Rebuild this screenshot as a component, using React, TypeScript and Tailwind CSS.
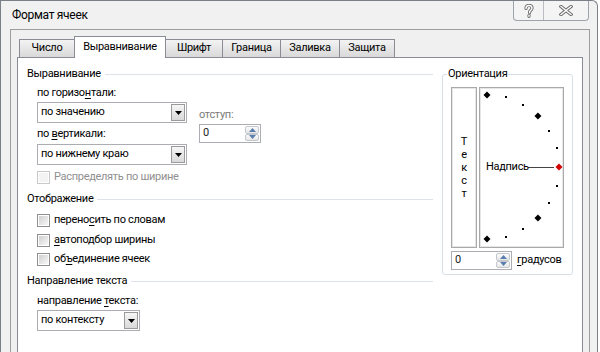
import React from "react";

const font = "font-['Roboto',sans-serif] tracking-[-0.3px]";

function Tri() {
  return (
    <svg width="7" height="4" viewBox="0 0 7 4">
      <path d="M0 0H7L3.5 4Z" fill="#000" />
    </svg>
  );
}

function Combo({ text, w }: { text: string; w: string }) {
  return (
    <div className={`flex h-[21px] ${w} border border-[#abadb3] bg-white`}>
      <div className="flex flex-1 items-center pl-[3px] text-[11px] text-black">{text}</div>
      <div className="my-px mr-px flex w-[14px] items-center justify-center border border-[#9a9a9a] bg-gradient-to-b from-[#f6f6f6] to-[#d9d9d9]">
        <Tri />
      </div>
    </div>
  );
}

function SpinArrow({ up }: { up: boolean }) {
  return (
    <svg width="7" height="4" viewBox="0 0 7 4">
      <path d={up ? "M0 4H7L3.5 0Z" : "M0 0H7L3.5 4Z"} fill="#5a7fae" />
    </svg>
  );
}

function Spin({ w }: { w: string }) {
  return (
    <div className={`flex h-[19px] ${w} border border-[#abadb3] bg-white`}>
      <div className="flex flex-1 items-center pl-[3px] text-[11px] text-[#222]">0</div>
      <div className="flex w-[16px] flex-col p-px">
        <div className="flex flex-1 items-center justify-center rounded-[2px] border border-[#c3c8ce] bg-gradient-to-b from-[#fbfbfb] to-[#e6e6e6]">
          <SpinArrow up />
        </div>
        <div className="flex flex-1 items-center justify-center rounded-[2px] border border-[#c3c8ce] bg-gradient-to-b from-[#fbfbfb] to-[#e6e6e6]">
          <SpinArrow up={false} />
        </div>
      </div>
    </div>
  );
}

function Check({ disabled }: { disabled?: boolean }) {
  return (
    <div
      className={`h-[13px] w-[13px] shrink-0 border p-px ${
        disabled ? "border-[#c8c8c8] bg-white" : "border-[#8e8f8f] bg-white"
      }`}
    >
      <div
        className={`h-full w-full ${
          disabled ? "bg-[#f3f3f3]" : "bg-gradient-to-br from-[#cfcfcf] to-[#f8f8f8]"
        }`}
      />
    </div>
  );
}

function Heading({ children }: { children: React.ReactNode }) {
  return (
    <div className="flex h-[16px] items-center text-[11px] text-black">
      <span>{children}</span>
      <div className="ml-[4px] h-px flex-1 bg-[#dde3e8]" />
    </div>
  );
}

function CheckRow({ label, h, disabled }: { label: React.ReactNode; h: string; disabled?: boolean }) {
  return (
    <div className={`flex ${h} items-center gap-[4px] text-[11px] ${disabled ? "text-[#8f8f8f]" : "text-black"}`}>
      <Check disabled={disabled} />
      <span>{label}</span>
    </div>
  );
}

function Tab({ label, selected, w }: { label: string; selected?: boolean; w: string }) {
  if (selected) {
    return (
      <div
        className={`relative z-10 -mb-px -ml-px flex h-[22px] ${w} items-start justify-center border-l border-r border-t border-[#898c95] bg-white pt-[2px] text-[11px] text-black`}
      >
        {label}
      </div>
    );
  }
  return (
    <div
      className={`-ml-px flex h-[18px] ${w} items-center justify-center border-l border-r border-t border-[#898c95] bg-gradient-to-b from-[#f3f3f3] to-[#d9d9d9] text-[11px] text-black first:ml-0`}
    >
      {label}
    </div>
  );
}

function Orientation() {
  const cx = 7;
  const cy = 79;
  const r = 72;
  const angles = [90, 75, 60, 45, 30, 15, 0, -15, -30, -45, -60, -75, -90];
  return (
    <div className="relative mt-[8px] flex h-[201px] w-[131px] flex-col rounded-[3px] border border-[#d5dfe5] pl-[8px] pr-[8px] pt-[12px]">
      <span className="absolute left-[4px] top-[-9px] bg-white px-px text-[11px] leading-[16px] text-black">Ориентация</span>
      <div className="flex h-[161px]">
        <div className="flex w-[26px] flex-col items-center justify-center border border-[#a9a9a9] text-[11px] leading-[13px] text-black shadow-[inset_1px_1px_0_#e6e6e6,inset_-1px_-1px_0_#e6e6e6]">
          <span className="h-[13px]">Т</span>
          <span className="h-[13px]">е</span>
          <span className="h-[13px]">к</span>
          <span className="h-[13px]">с</span>
          <span className="h-[13px]">т</span>
        </div>
        <div className="relative ml-[2px] w-[85px] border border-[#a9a9a9] shadow-[inset_1px_1px_0_#e6e6e6,inset_-1px_-1px_0_#e6e6e6]">
          <svg className="absolute left-0 top-0" width="83" height="159" viewBox="0 0 83 159">
            <line x1="48" y1={cy + 0.5} x2="74" y2={cy + 0.5} stroke="#444" strokeWidth="1" />
            {angles.map((a) => {
              const rad = (a * Math.PI) / 180;
              const x = cx + r * Math.cos(rad);
              const y = cy - r * Math.sin(rad);
              const big = a % 45 === 0;
              if (a === 0) {
                return <path key={a} d={`M${x} ${y - 3.5}L${x + 3.5} ${y}L${x} ${y + 3.5}L${x - 3.5} ${y}Z`} fill="#d40000" />;
              }
              if (big) {
                return <path key={a} d={`M${x} ${y - 3.5}L${x + 3.5} ${y}L${x} ${y + 3.5}L${x - 3.5} ${y}Z`} fill="#000" />;
              }
              return <rect key={a} x={Math.round(x) - 1} y={Math.round(y) - 1} width="2" height="2" fill="#000" />;
            })}
          </svg>
          <span className="absolute left-[6px] top-[71px] text-[11px] leading-[16px] text-black">Надпись</span>
        </div>
      </div>
      <div className="mt-[3px] flex h-[19px] items-center">
        <Spin w="w-[61px]" />
        <span className="ml-[5px] text-[11px] text-black">
          <u className="underline-offset-2">г</u>радусов
        </span>
      </div>
    </div>
  );
}

function HelpIcon() {
  return (
    <svg width="12" height="14" viewBox="0 0 12 14">
      <path
        d="M3 4.5C3 2.5 4.5 1.5 6 1.5C7.8 1.5 9 2.6 9 4.2C9 6 7 6.3 6.6 7.8V8.8M6 11.3V12.3"
        fill="none"
        stroke="#6b6b6b"
        strokeWidth="3.2"
        strokeLinecap="round"
      />
      <path
        d="M3 4.5C3 2.5 4.5 1.5 6 1.5C7.8 1.5 9 2.6 9 4.2C9 6 7 6.3 6.6 7.8V8.8M6 11.3V12.3"
        fill="none"
        stroke="#ffffff"
        strokeWidth="1.4"
        strokeLinecap="round"
      />
    </svg>
  );
}

function CloseIcon() {
  return (
    <svg width="14" height="11" viewBox="0 0 14 11">
      <path d="M2 1.5L12 9.5M12 1.5L2 9.5" stroke="#6b6b6b" strokeWidth="3.4" strokeLinecap="square" />
      <path d="M2 1.5L12 9.5M12 1.5L2 9.5" stroke="#ffffff" strokeWidth="1.4" strokeLinecap="square" />
    </svg>
  );
}

export default function App() {
  return (
    <div className={`h-[352px] w-[600px] overflow-hidden bg-white ${font}`}>
      <div className="flex h-[370px] w-[598px] flex-col rounded-tr-[6px] border-l border-r border-t border-[#7b7f86] bg-[#f1f1f1]">
        {/* title bar */}
        <div className="flex h-[28px] justify-between">
          <span className="pl-[11px] pt-[6px] text-[12px] leading-[16px] text-black">Формат ячеек</span>
          <div className="mr-[8px] flex h-[20px] rounded-b-[4px] border-b border-l border-r border-[#9ea3aa] bg-[#f4f4f4]">
            <div className="flex w-[30px] items-center justify-center border-r border-[#b9bdc2]">
              <HelpIcon />
            </div>
            <div className="flex w-[44px] items-center justify-center">
              <CloseIcon />
            </div>
          </div>
        </div>
        {/* client area */}
        <div className="ml-[9px] mr-[7px] flex flex-1 flex-col border-l border-r border-t border-[#9d9d9d] bg-[#f0f0f0] pl-[6px] pr-[6px] pt-[6px]">
          <div className="flex h-[21px] items-end pl-[2px]">
            <Tab label="Число" w="w-[56px]" />
            <Tab label="Выравнивание" w="w-[92px]" selected />
            <Tab label="Шрифт" w="w-[58px]" />
            <Tab label="Граница" w="w-[59px]" />
            <Tab label="Заливка" w="w-[60px]" />
            <Tab label="Защита" w="w-[56px]" />
          </div>
          <div className="flex flex-1 border border-[#898c95] bg-white pl-[9px] pr-[9px] pt-[8px]">
            {/* left column */}
            <div className="flex w-[406px] flex-col">
              <Heading>Выравнивание</Heading>
              <div className="flex pl-[10px]">
                <div className="flex w-[150px] flex-col">
                  <div className="mt-[3px] h-[16px] text-[11px] leading-[16px] text-black">
                    по горизо<u className="underline-offset-2">н</u>тали:
                  </div>
                  <div className="mt-[1px]">
                    <Combo text="по значению" w="w-[150px]" />
                  </div>
                  <div className="mt-[3px] h-[16px] text-[11px] leading-[16px] text-black">
                    по <u className="underline-offset-2">в</u>ертикали:
                  </div>
                  <div className="mt-[2px]">
                    <Combo text="по нижнему краю" w="w-[150px]" />
                  </div>
                </div>
                <div className="ml-[12px] flex flex-col">
                  <div className="mt-[25px] h-[16px] text-[11px] leading-[16px] text-[#7a7a7a]">отступ:</div>
                  <div className="mt-[1px]">
                    <Spin w="w-[62px]" />
                  </div>
                </div>
              </div>
              <div className="mt-[4px] pl-[10px]">
                <CheckRow label="Распределять по ширине" h="h-[16px]" disabled />
              </div>
              <div className="mt-[6px]">
                <Heading>Отображение</Heading>
              </div>
              <div className="mt-[3px] flex flex-col pl-[10px]">
                <CheckRow
                  h="h-[20px]"
                  label={
                    <>
                      перено<u className="underline-offset-2">с</u>ить по словам
                    </>
                  }
                />
                <CheckRow
                  h="h-[20px]"
                  label={
                    <>
                      <u className="underline-offset-2">а</u>втоподбор ширины
                    </>
                  }
                />
                <CheckRow
                  h="h-[19px]"
                  label={
                    <>
                      об<u className="underline-offset-2">ъ</u>единение ячеек
                    </>
                  }
                />
              </div>
              <div className="mt-[4px]">
                <Heading>Направление текста</Heading>
              </div>
              <div className="mt-[4px] flex flex-col pl-[10px]">
                <div className="h-[16px] text-[11px] leading-[16px] text-black">
                  направление <u className="underline-offset-2">т</u>екста:
                </div>
                <div className="mt-[1px]">
                  <Combo text="по контексту" w="w-[103px]" />
                </div>
              </div>
            </div>
            {/* right column */}
            <div className="ml-[9px]">
              <Orientation />
            </div>
          </div>
        </div>
      </div>
    </div>
  );
}
